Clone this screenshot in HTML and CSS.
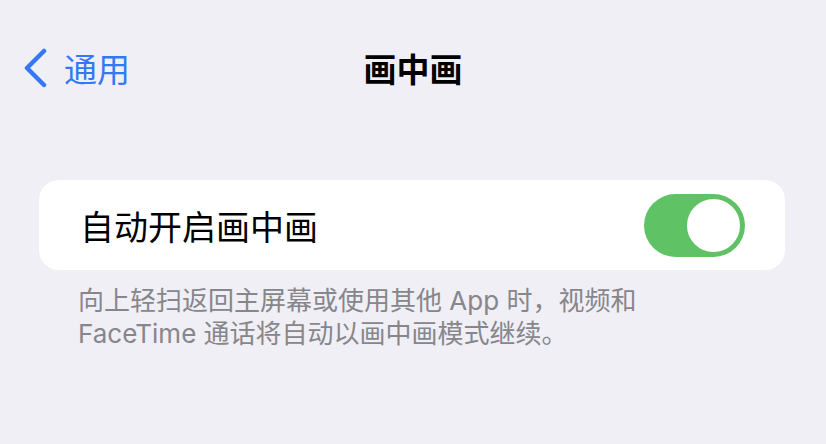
FILE: index.html
```html
<!DOCTYPE html>
<html lang="zh-CN">
<head>
    <meta charset="UTF-8">
    <meta name="viewport" content="width=device-width, initial-scale=1.0">
    <title>画中画</title>
    <link rel="stylesheet" href="styles.css">
</head>
<body>
    <div class="nav">
        <a class="back" href="#">
            <svg class="chevron" width="26" height="40" viewBox="0 0 26 40">
                <polyline points="21,3 4,20 21,37" fill="none" stroke="currentColor" stroke-width="4.5" stroke-linecap="round" stroke-linejoin="round"/>
            </svg>
            <span>通用</span>
        </a>
        <h1 class="title">画中画</h1>
        <div></div>
    </div>

    <div class="card">
        <div class="row">
            <span class="row-label">自动开启画中画</span>
            <div class="switch on">
                <div class="knob"></div>
            </div>
        </div>
    </div>

    <p class="footer">向上轻扫返回主屏幕或使用其他 App 时，视频和<br>FaceTime 通话将自动以画中画模式继续。</p>
</body>
</html>
```

FILE: styles.css
```css
body {
    margin: 0;
    padding: 0;
    background-color: #f0eff5;
    font-family: Inter, "Noto Sans CJK SC", sans-serif;
    color: #000;
}
.nav {
    display: grid;
    grid-template-columns: 1fr auto 1fr;
    align-items: center;
    height: 56px;
    margin-top: 40px;
}
.back {
    display: flex;
    align-items: center;
    gap: 15px;
    padding-left: 23px;
    color: #3478f6;
    text-decoration: none;
    font-size: 33px;
}
.chevron {
    display: block;
}
.title {
    margin: 0;
    font-size: 33px;
    font-weight: 700;
}
.card {
    margin: 84px 41px 0 39px;
    background: #fff;
    border-radius: 20px;
}
.row {
    display: flex;
    align-items: center;
    justify-content: space-between;
    height: 90px;
    padding: 0 40px 0 41px;
}
.row-label {
    font-size: 34px;
}
.switch {
    width: 101px;
    height: 63px;
    border-radius: 32px;
    background: #e9e9eb;
    display: flex;
    align-items: center;
    padding: 0 2px;
    box-sizing: border-box;
}
.switch.on {
    background: #5fc264;
    justify-content: flex-end;
}
.knob {
    width: 53px;
    height: 53px;
    border-radius: 50%;
    background: #fff;
    border: 3px solid #5fc264;
}
.footer {
    margin: 14px 40px 0 78px;
    font-size: 26px;
    line-height: 33px;
    color: #86868b;
}
```
